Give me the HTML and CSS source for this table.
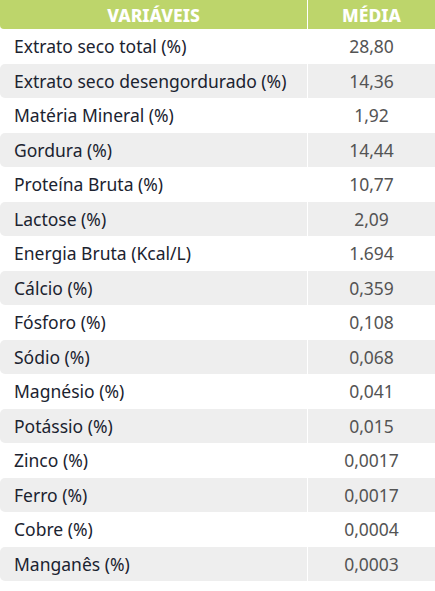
FILE: index.html
```html
<!DOCTYPE html>
<html lang="pt">
<head>
  <meta charset="UTF-8" />
  <meta name="viewport" content="width=device-width, initial-scale=1.0"/>
  <title>Composição</title>
  <link rel="stylesheet" href="styles.css">
</head>
<body>
  <table class="comp">
    <thead>
      <tr>
        <th class="col-var">Variáveis</th>
        <th class="col-val">Média</th>
      </tr>
    </thead>
    <tbody>
      <tr><td>Extrato seco total (%)</td><td>28,80</td></tr>
      <tr><td>Extrato seco desengordurado (%)</td><td>14,36</td></tr>
      <tr><td>Matéria Mineral (%)</td><td>1,92</td></tr>
      <tr><td>Gordura (%)</td><td>14,44</td></tr>
      <tr><td>Proteína Bruta (%)</td><td>10,77</td></tr>
      <tr><td>Lactose (%)</td><td>2,09</td></tr>
      <tr><td>Energia Bruta (Kcal/L)</td><td>1.694</td></tr>
      <tr><td>Cálcio (%)</td><td>0,359</td></tr>
      <tr><td>Fósforo (%)</td><td>0,108</td></tr>
      <tr><td>Sódio (%)</td><td>0,068</td></tr>
      <tr><td>Magnésio (%)</td><td>0,041</td></tr>
      <tr><td>Potássio (%)</td><td>0,015</td></tr>
      <tr><td>Zinco (%)</td><td>0,0017</td></tr>
      <tr><td>Ferro (%)</td><td>0,0017</td></tr>
      <tr><td>Cobre (%)</td><td>0,0004</td></tr>
      <tr><td>Manganês (%)</td><td>0,0003</td></tr>
    </tbody>
  </table>
</body>
</html>
```

FILE: styles.css
```css
body {
  margin: 0;
  background-color: #ffffff;
  font-family: 'Noto Sans', 'Open Sans', sans-serif;
}

.comp {
  width: 435px;
  border-collapse: separate;
  border-spacing: 0;
  table-layout: fixed;
}

.comp th {
  height: 29px;
  padding: 0;
  background-color: #bdd56b;
  color: #ffffff;
  font-size: 17.5px;
  font-weight: 800;
  text-transform: uppercase;
  text-align: center;
}

.comp .col-var {
  width: 307px;
  border-right: 1px solid #ffffff;
  border-radius: 0 0 0 4px;
}

.comp td {
  height: 34.5px;
  padding: 0;
  font-size: 17.5px;
  color: #1b2330;
}

.comp td:first-child {
  padding-left: 14px;
  border-right: 1px solid #ffffff;
}

.comp td:last-child {
  text-align: center;
  color: #545454;
}

.comp tbody tr:nth-child(even) td {
  background-color: #eeeeee;
}

.comp tbody tr:nth-child(even) td:first-child {
  border-radius: 5px 0 0 5px;
}
```
